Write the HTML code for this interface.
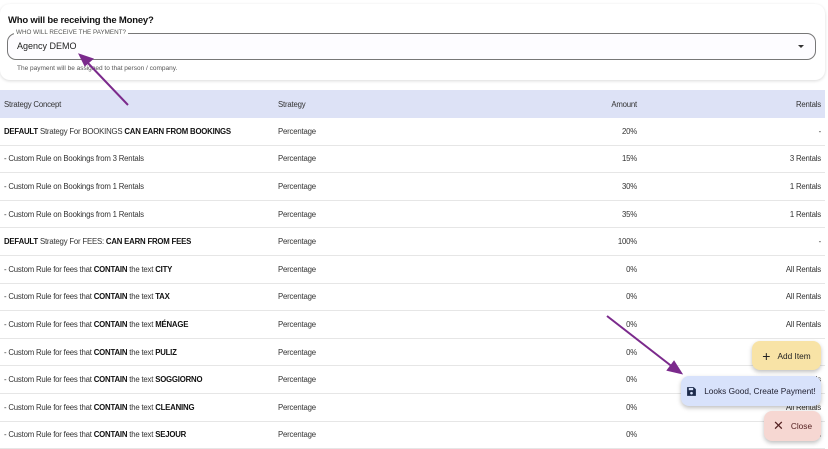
<!DOCTYPE html>
<html><head><style>
body{margin:0;width:828px;height:449px;overflow:hidden;background:#fff;font-family:"Liberation Sans",sans-serif;color:#222;position:relative}
.card{position:absolute;left:0;top:4px;width:825px;height:76px;border-radius:10px;box-shadow:0 1px 3px rgba(0,0,0,.15);background:#fff}
.t{position:absolute;left:8px;top:11px;font-size:9.5px;font-weight:bold;color:#111;letter-spacing:-0.2px}
.sel{position:absolute;left:7px;top:29px;width:809px;height:27px;border:1px solid #777;border-radius:9px;box-sizing:border-box;background:#fdfcff}
.sel .lb{position:absolute;left:6px;top:-5px;background:#fff;font-size:6.3px;color:#555;padding:0 2px}
.sel .v{position:absolute;left:9px;top:7px;font-size:9px;color:#222}
.sel .ar{position:absolute;right:11px;top:11px;border-left:3px solid transparent;border-right:3px solid transparent;border-top:3px solid #333}
.hint{position:absolute;left:17px;top:61px;font-size:6.5px;color:#555}
table{position:absolute;left:0;top:90px;width:825px;border-collapse:collapse;font-size:7.8px;letter-spacing:-0.2px}
th{background:#dde2f6;height:28px;font-weight:normal;text-align:left;padding:0 4px;color:#333}
td{height:26.6px;border-bottom:1px solid #e6e6e6;padding:0 4px;color:#333}
.r{text-align:right}
b{color:#111;font-weight:bold}
.btn{position:absolute;border-radius:8px;font-size:8.3px;box-shadow:0 2px 4px rgba(0,0,0,.25);display:flex;align-items:center;justify-content:center;gap:7px}
</style></head><body>
<div class="card">
<div class="t">Who will be receiving the Money?</div>
<div class="sel"><span class="lb">WHO WILL RECEIVE THE PAYMENT?</span><span class="v">Agency DEMO</span><span class="ar"></span></div>
<div class="hint">The payment will be assigned to that person / company.</div>
</div>
<table>
<tr><th style="width:266px">Strategy Concept</th><th style="width:200px">Strategy</th><th class="r" style="width:151px;text-align:right">Amount</th><th style="text-align:right">Rentals</th></tr>
<tr><td><b>DEFAULT</b> Strategy For BOOKINGS <b>CAN EARN FROM BOOKINGS</b></td><td>Percentage</td><td class="r">20%</td><td class="r">-</td></tr>
<tr><td>- Custom Rule on Bookings from 3 Rentals</td><td>Percentage</td><td class="r">15%</td><td class="r">3 Rentals</td></tr>
<tr><td>- Custom Rule on Bookings from 1 Rentals</td><td>Percentage</td><td class="r">30%</td><td class="r">1 Rentals</td></tr>
<tr><td>- Custom Rule on Bookings from 1 Rentals</td><td>Percentage</td><td class="r">35%</td><td class="r">1 Rentals</td></tr>
<tr><td><b>DEFAULT</b> Strategy For FEES: <b>CAN EARN FROM FEES</b></td><td>Percentage</td><td class="r">100%</td><td class="r">-</td></tr>
<tr><td>- Custom Rule for fees that <b>CONTAIN</b> the text <b>CITY</b></td><td>Percentage</td><td class="r">0%</td><td class="r">All Rentals</td></tr>
<tr><td>- Custom Rule for fees that <b>CONTAIN</b> the text <b>TAX</b></td><td>Percentage</td><td class="r">0%</td><td class="r">All Rentals</td></tr>
<tr><td>- Custom Rule for fees that <b>CONTAIN</b> the text <b>MÉNAGE</b></td><td>Percentage</td><td class="r">0%</td><td class="r">All Rentals</td></tr>
<tr><td>- Custom Rule for fees that <b>CONTAIN</b> the text <b>PULIZ</b></td><td>Percentage</td><td class="r">0%</td><td class="r">All Rentals</td></tr>
<tr><td>- Custom Rule for fees that <b>CONTAIN</b> the text <b>SOGGIORNO</b></td><td>Percentage</td><td class="r">0%</td><td class="r">All Rentals</td></tr>
<tr><td>- Custom Rule for fees that <b>CONTAIN</b> the text <b>CLEANING</b></td><td>Percentage</td><td class="r">0%</td><td class="r">All Rentals</td></tr>
<tr><td>- Custom Rule for fees that <b>CONTAIN</b> the text <b>SEJOUR</b></td><td>Percentage</td><td class="r">0%</td><td class="r">All Rentals</td></tr>
</table>
<div class="btn" style="left:752px;top:341px;width:69px;height:29px;background:#f8e3a6"><span style="font-size:14px">+</span>Add Item</div>
<div class="btn" style="left:681px;top:376px;width:140px;height:30px;background:#d8e2fb;color:#223"><svg width="11" height="11" viewBox="0 0 10 10"><path d="M1 1h6l2 2v6H1z" fill="#1c2a4a"/><rect x="2.5" y="1.8" width="4" height="2" fill="#d8e2fb"/><circle cx="5" cy="6.5" r="1.2" fill="#d8e2fb"/></svg>Looks Good, Create Payment!</div>
<div class="btn" style="left:764px;top:411px;width:57px;height:30px;background:#f6d7d2;color:#522"><span style="font-size:13px">✕</span>Close</div>
<svg width="828" height="449" style="position:absolute;left:0;top:0;pointer-events:none">
<g stroke="#7b2a8c" stroke-width="2" fill="#7b2a8c">
<line x1="128" y1="105" x2="86" y2="61"/><path d="M80 55 L92 59 L85 65 Z"/>
<line x1="607" y1="316" x2="674" y2="368"/><path d="M681 373 L668 370 L674 362 Z"/>
</g></svg>
</body></html>
